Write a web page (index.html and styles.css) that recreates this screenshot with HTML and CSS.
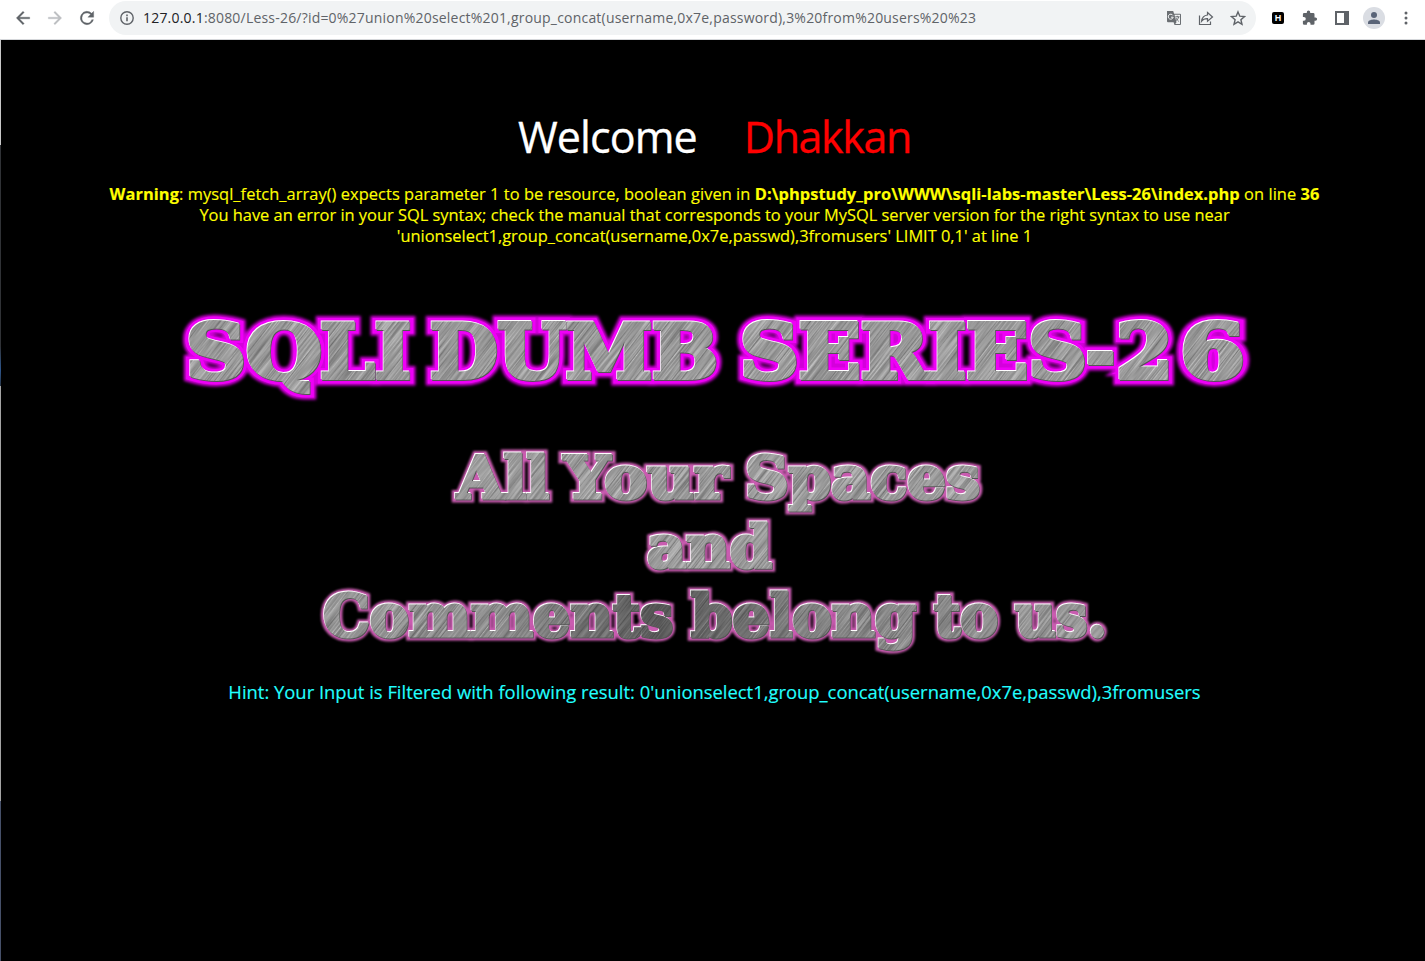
FILE: index.html
```html
<!DOCTYPE html>
<html lang="en">
<head>
<meta charset="utf-8">
<title>Less-26</title>
<link rel="stylesheet" href="styles.css">
</head>
<body>
<header class="toolbar">
  <nav class="nav">
    <svg class="icon" viewBox="0 0 24 24"><path fill="#5f6368" stroke="#5f6368" stroke-width=".4" d="M20 11H7.8l5.6-5.6L12 4l-8 8 8 8 1.4-1.4L7.8 13H20z"/></svg>
    <svg class="icon" viewBox="0 0 24 24"><path fill="#bcbec1" stroke="#bcbec1" stroke-width=".4" d="M4 11h12.2l-5.6-5.6L12 4l8 8-8 8-1.4-1.4 5.6-5.6H4z"/></svg>
    <svg class="icon" viewBox="0 0 24 24"><path fill="#5f6368" stroke="#5f6368" stroke-width=".4" d="M17.65 6.35A8 8 0 1 0 19.73 14h-2.08A6 6 0 1 1 12 6c1.66 0 3.14.69 4.22 1.78L13 11h7V4z"/></svg>
  </nav>
  <div class="omnibox">
    <svg class="info" viewBox="0 0 16 16"><circle cx="8" cy="8" r="6.2" fill="none" stroke="#5f6368" stroke-width="1.4"/><path fill="#5f6368" d="M7.2 7.2h1.6v4H7.2zM7.2 4.6h1.6v1.6H7.2z"/></svg>
    <span class="url"><span class="host">127.0.0.1</span>:8080/Less-26/?id=0%27union%20select%201,group_concat(username,0x7e,password),3%20from%20users%20%23</span>
    <div class="page-actions">
      <svg class="small" viewBox="0 0 16 16"><path fill="#6b6f73" d="M1 1h6.2l.9 2.7H14a1 1 0 0 1 1 1V14a1 1 0 0 1-1 1H8.500l-.9-2.700H2a1 1 0 0 1-1-1z"/><path fill="#f1f3f4" d="M8.500 4.700H14V14H9.300l1.200-1.700z"/><path fill="none" stroke="#f1f3f4" d="M6.900 5.400A2.500 2.500 0 1 0 7.200 7.200H5"/><path fill="none" stroke="#5f6368" stroke-width=".9" d="M9.300 6.800h4.200M11.300 5.800v1M12.700 6.800c-.5 2-1.700 3.200-3 4.200M10.200 8.200c.7 1.500 1.500 2.400 2.600 3.200"/></svg>
      <svg class="small" viewBox="0 0 16 16"><path fill="none" stroke="#5f6368" stroke-width="1.200" d="M1.500 5.500v9h11v-3M9.500 2.500 14.500 7l-5 4.200V8.600C6.800 8.500 5 9.300 3.600 11.200 4 7.700 6 5.400 9.500 5z"/></svg>
      <svg class="small" viewBox="0 0 16 16"><path fill="none" stroke="#5f6368" stroke-width="1.400" d="m8 1.900 1.800 4.300 4.700.4-3.600 3.100 1.100 4.600L8 11.900l-4 2.400 1.100-4.600-3.600-3.100 4.700-.4z"/></svg>
    </div>
  </div>
  <div class="extensions">
    <span class="h-badge">H</span>
    <svg class="small" viewBox="0 0 16 16"><path fill="#5f6368" d="M13.500 7.500h-1V4.300a1.300 1.300 0 0 0-1.300-1.300H8.200V2.300a1.700 1.700 0 0 0-3.400 0V3H2.200A1.300 1.300 0 0 0 .9 4.300v2.600h1a1.900 1.900 0 0 1 0 3.800h-1v2.700a1.300 1.300 0 0 0 1.300 1.300h2.700v-1a1.800 1.800 0 0 1 3.600 0v1h2.700a1.300 1.300 0 0 0 1.300-1.300v-2.700h1a1.600 1.600 0 0 0 0-3.200z"/></svg>
    <svg class="small" viewBox="0 0 16 16"><path fill="#5f6368" fill-rule="evenodd" d="M1 1h14v14H1zM3 3v10h7V3z"/></svg>
    <span class="avatar"><svg class="small" viewBox="0 0 16 16"><circle cx="8" cy="5" r="3" fill="#5a6478"/><path fill="#5a6478" d="M2 14v-1.500C2 10.300 6 9.500 8 9.500s6 .8 6 3V14z"/></svg></span>
    <svg class="small" viewBox="0 0 16 16"><g fill="#5f6368"><circle cx="8" cy="3" r="1.500"/><circle cx="8" cy="8" r="1.500"/><circle cx="8" cy="13" r="1.500"/></g></svg>
  </div>
</header>
<main class="page">
  <h1 class="welcome"><span class="greet">Welcome</span><span class="name">Dhakkan</span></h1>
  <div class="error">
    <p class="line l1"><b>Warning</b>: mysql_fetch_array() expects parameter 1 to be resource, boolean given in <b>D:\phpstudy_pro\WWW\sqli-labs-master\Less-26\index.php</b> on line <b>36</b></p>
    <p class="line">You have an error in your SQL syntax; check the manual that corresponds to your MySQL server version for the right syntax to use near</p>
    <p class="line">'unionselect1,group_concat(username,0x7e,passwd),3fromusers' LIMIT 0,1' at line 1</p>
  </div>
  <svg class="banner" viewBox="170 290 1090 380">
    <defs>
      <g id="title" class="slab title">
        <text x="186" y="378" textLength="60" lengthAdjust="spacingAndGlyphs">S</text>
        <text x="246" y="378" textLength="76" lengthAdjust="spacingAndGlyphs">Q</text>
        <text x="320" y="378" textLength="91" lengthAdjust="spacingAndGlyphs">LI</text>
        <text x="430" y="378" textLength="288" lengthAdjust="spacingAndGlyphs">DUMB</text>
        <text x="740" y="378" textLength="347" lengthAdjust="spacingAndGlyphs">SERIES</text>
        <text x="1086" y="378" textLength="29" lengthAdjust="spacingAndGlyphs">-</text>
        <text x="1116" y="378" textLength="57" lengthAdjust="spacingAndGlyphs">2</text>
        <text x="1180" y="378" textLength="65" lengthAdjust="spacingAndGlyphs">6</text>
      </g>
      <g id="motto" class="slab motto">
        <text x="457" y="498" textLength="92" lengthAdjust="spacingAndGlyphs">All</text>
        <text x="564" y="498" textLength="164" lengthAdjust="spacingAndGlyphs">Your</text>
        <text x="745" y="498" textLength="235" lengthAdjust="spacingAndGlyphs">Spaces</text>
        <text x="647" y="567" textLength="125" lengthAdjust="spacingAndGlyphs">and</text>
        <text x="323" y="636" textLength="350" lengthAdjust="spacingAndGlyphs">Comments</text>
        <text x="691" y="636" textLength="225" lengthAdjust="spacingAndGlyphs">belong</text>
        <text x="934" y="636" textLength="64" lengthAdjust="spacingAndGlyphs">to</text>
        <text x="1015" y="636" textLength="92" lengthAdjust="spacingAndGlyphs">us.</text>
      </g>
      <filter id="soft" x="-5%" y="-20%" width="110%" height="140%"><feGaussianBlur stdDeviation="1.800"/></filter>
      <filter id="soft-thin" x="-5%" y="-20%" width="110%" height="140%"><feGaussianBlur stdDeviation="1.100"/></filter>
      <filter id="brushed" x="0" y="0" width="100%" height="100%" color-interpolation-filters="sRGB">
        <feTurbulence type="fractalNoise" baseFrequency="0.018 0.7" numOctaves="2" seed="4"/>
        <feColorMatrix values=".5 0 0 0 .35  .5 0 0 0 .35  .5 0 0 0 .35  0 0 0 0 1"/>
      </filter>
      <linearGradient id="shade" gradientUnits="userSpaceOnUse" x1="320" y1="0" x2="1110" y2="0">
        <stop offset="0" stop-color="#000" stop-opacity="0"/><stop offset=".25" stop-color="#000" stop-opacity=".1"/>
        <stop offset=".43" stop-color="#000" stop-opacity=".42"/><stop offset=".62" stop-color="#000" stop-opacity=".15"/>
        <stop offset="1" stop-color="#000" stop-opacity="0"/>
      </linearGradient>
      <mask id="letters" maskUnits="userSpaceOnUse" x="170" y="290" width="1090" height="380">
        <use href="#title" class="mask-fill wide"/><use href="#motto" class="mask-fill"/>
      </mask>
    </defs>
    <use href="#title" class="glow" filter="url(#soft)"/>
    <use href="#title" class="rim"/>
    <use href="#motto" class="glow-thin" filter="url(#soft-thin)"/>
    <g class="light" transform="translate(-.7 -.7)"><use href="#title" class="wide"/><use href="#motto"/></g>
    <g class="dark" transform="translate(.7 .7)"><use href="#title" class="wide"/><use href="#motto"/></g>
    <g mask="url(#letters)">
      <g transform="rotate(-52 715 480)"><rect x="100" y="-200" width="1230" height="1360" filter="url(#brushed)"/></g>
      <rect x="170" y="570" width="1090" height="100" fill="url(#shade)"/>
    </g>
  </svg>
  <p class="hint">Hint: Your Input is Filtered with following result: 0'unionselect1,group_concat(username,0x7e,passwd),3fromusers</p>
</main>
</body>
</html>
```
FILE: styles.css
```css
* { box-sizing: border-box; }
body {
  margin: 0;
  height: 961px;
  overflow: hidden;
  display: flex;
  flex-direction: column;
  background: #000;
  font-family: "Open Sans", "Noto Sans", sans-serif;
}
.toolbar {
  flex: none;
  height: 40px;
  display: flex;
  align-items: flex-start;
  background: #fff;
  border-bottom: 1px solid #d5d7da;
  padding: 1px 11px 0 13px;
}
.nav { display: flex; gap: 12px; padding-top: 7px; margin-right: 12px; }
.icon { width: 20px; height: 20px; }
.omnibox {
  flex: none;
  width: 1147px;
  height: 34px;
  display: flex;
  align-items: center;
  border-radius: 17px;
  background: #f1f3f4;
  padding: 0 10px;
}
.info { width: 16px; height: 16px; margin-right: 8px; }
.small { width: 16px; height: 16px; flex: none; }
.url { font-size: 14px; color: #5f6368; letter-spacing: 0.2px; white-space: nowrap; margin-top: -2px; }
.host { color: #202124; }
.page-actions { display: flex; gap: 16px; margin-left: auto; }
.extensions { display: flex; align-items: center; gap: 16px; height: 34px; padding-left: 16px; }
.h-badge {
  width: 12px;
  height: 12px;
  border-radius: 2px;
  background: #000;
  color: #fff;
  font: bold 9px/12px "Liberation Sans", sans-serif;
  text-align: center;
}
.extensions .h-badge + .small { margin-left: 2px; }
.avatar { width: 22px; height: 22px; margin: 0 -3px; border-radius: 50%; background: #dadde3; display: flex; align-items: center; justify-content: center; }
.page {
  flex: 1;
  display: flex;
  flex-direction: column;
  align-items: center;
  background: linear-gradient(#c8c8c8 105px, #303236 105px 306px, #2d558c 330px, #283546 346px, #a4a4a4 346px 761px, #465069 761px) left top / 1px 100% no-repeat #000;
  padding-top: 68px;
  padding-left: 4px;
}
.welcome {
  display: flex;
  gap: 47px;
  margin: 0;
  font-size: 43px;
  line-height: 58px;
  font-weight: 400;
  color: #fff;
  -webkit-text-stroke: 0.3px;
}
.greet { letter-spacing: -0.9px; }
.name { color: #f00; letter-spacing: -1.4px; }
.error { margin-top: 17px; color: #ff0; font-size: 16.4px; -webkit-text-stroke: 0.15px; }
.line { margin: 0; line-height: 21px; text-align: center; white-space: nowrap; }
.l1 { letter-spacing: 0.06px; }
.banner { flex: none; width: 1090px; height: 380px; margin-top: 44px; }
.slab { font-family: "DejaVu Serif", serif; font-weight: 700; stroke-linejoin: miter; }
.title { font-size: 74px; }
.motto { font-size: 57.5px; }
.glow { fill: #d400dc; stroke: #d400dc; stroke-width: 15px; stroke-linejoin: round; }
.rim { fill: #ee00f6; stroke: #ee00f6; stroke-width: 11px; }
.glow-thin { fill: #c95cb0; stroke: #c95cb0; stroke-width: 9px; }
.glow .slab, .rim .slab, .glow-thin .slab { stroke-linejoin: round; }
.light { fill: #fff; stroke: #fff; stroke-width: 3px; }
.dark { fill: #555; stroke: #555; stroke-width: 3px; }
.mask-fill { fill: #fff; stroke: #fff; stroke-width: 3px; }
.wide { stroke-width: 4px; }
.hint { margin: 10px 0 0; font-size: 18.4px; line-height: 24px; color: #2ff; white-space: nowrap; -webkit-text-stroke: 0.15px; }
```
